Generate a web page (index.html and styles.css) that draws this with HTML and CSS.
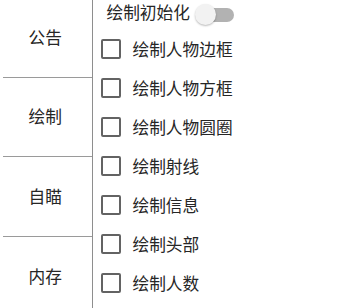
FILE: index.html
```html
<!DOCTYPE html>
<html lang="zh-CN">
<head>
<meta charset="utf-8">
<title>菜单</title>
<link rel="stylesheet" href="styles.css">
</head>
<body>
<div class="app">
  <nav class="tabs">
    <div class="tab">公告</div>
    <div class="tab">绘制</div>
    <div class="tab">自瞄</div>
    <div class="tab">内存</div>
  </nav>
  <main class="panel">
    <div class="header">
      <span class="label">绘制初始化</span>
      <span class="switch"><span class="track"></span><span class="thumb"></span></span>
    </div>
    <ul class="options">
      <li class="option"><span class="box"></span><span class="label">绘制人物边框</span></li>
      <li class="option"><span class="box"></span><span class="label">绘制人物方框</span></li>
      <li class="option"><span class="box"></span><span class="label">绘制人物圆圈</span></li>
      <li class="option"><span class="box"></span><span class="label">绘制射线</span></li>
      <li class="option"><span class="box"></span><span class="label">绘制信息</span></li>
      <li class="option"><span class="box"></span><span class="label">绘制头部</span></li>
      <li class="option"><span class="box"></span><span class="label">绘制人数</span></li>
    </ul>
  </main>
</div>
</body>
</html>
```
FILE: styles.css
```css
* { box-sizing: border-box; }
html, body {
  margin: 0;
  padding: 0;
  background: #ffffff;
}
body {
  font-family: "Noto Sans CJK SC", "Noto Sans", sans-serif;
  font-size: 16.7px;
  color: #262626;
  overflow: hidden;
}
.app {
  display: flex;
  height: 308px;
  overflow: hidden;
}
.tabs {
  width: 92.5px;
  flex: none;
  border-right: 1.5px solid #8e8e8e;
  display: flex;
  flex-direction: column;
  margin-top: -2px;
}
.tab {
  flex: none;
  height: 79.5px;
  margin-left: 3px;
  padding-right: 4px;
  border-bottom: 1.5px solid #9a9a9a;
  display: flex;
  align-items: center;
  justify-content: center;
  line-height: 1;
}
.tab:last-child { border-bottom: none; }
.panel {
  flex: 1;
  display: flex;
  flex-direction: column;
}
.header {
  height: 25px;
  display: flex;
  align-items: center;
  padding-left: 14px;
  gap: 5px;
}
.header .label { line-height: 1; }
.switch {
  position: relative;
  width: 39px;
  height: 21px;
  margin-top: 4px;
  display: flex;
  align-items: center;
}
.track {
  margin-left: 4px;
  width: 35px;
  height: 14px;
  border-radius: 7px;
  background: #b2b2b2;
}
.thumb {
  position: absolute;
  left: 0;
  top: 0;
  width: 21px;
  height: 21px;
  border-radius: 50%;
  background: #f2f2f2;
  box-shadow: 0 1px 2px rgba(0, 0, 0, 0.28);
}
.options {
  list-style: none;
  margin: 4.5px 0 0;
  padding: 0;
}
.option {
  height: 39px;
  display: flex;
  align-items: center;
  padding-left: 8px;
  gap: 12px;
}
.box {
  width: 20px;
  height: 20px;
  border: 2.5px solid #636363;
  border-radius: 2px;
  flex: none;
}
.option .label { line-height: 1; }
```
